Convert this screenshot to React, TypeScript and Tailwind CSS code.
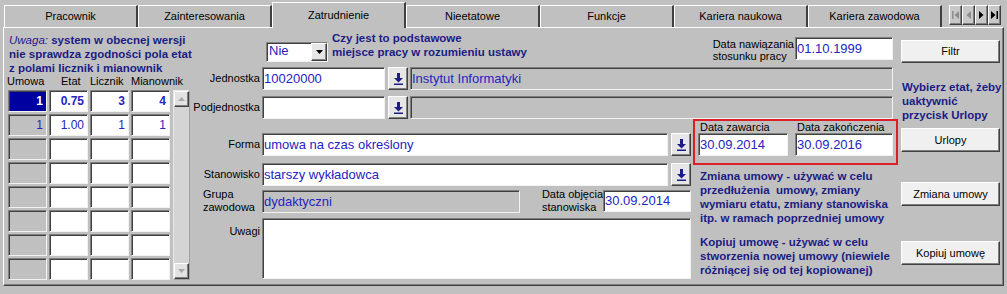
import React from 'react';

const SUNKEN =
  'border border-t-[#808080] border-l-[#808080] border-r-[#f2f2f2] border-b-[#f2f2f2] shadow-[inset_1px_1px_0_#404040]';
const RAISED =
  'border border-t-white border-l-white border-r-[#404040] border-b-[#404040] shadow-[inset_-1px_-1px_0_#808080]';
const NAVY = 'text-[#1c1c84] font-bold text-[11.5px] leading-[14px] whitespace-nowrap';
const VAL = 'text-[#2424c0] text-[13px] whitespace-nowrap';

const tabs = [
  'Pracownik',
  'Zainteresowania',
  'Zatrudnienie',
  'Nieetatowe',
  'Funkcje',
  'Kariera naukowa',
  'Kariera zawodowa',
];

const gridRows = [
  ['1', '0.75', '3', '4'],
  ['1', '1.00', '1', '1'],
  ['', '', '', ''],
  ['', '', '', ''],
  ['', '', '', ''],
  ['', '', '', ''],
  ['', '', '', ''],
  ['', '', '', ''],
];

const PickArrow = () => (
  <svg width="9" height="12" viewBox="0 0 9 12">
    <rect x="3" y="0" width="3" height="5" fill="#1c1c84" />
    <path d="M0 5h9L4.5 9.5z" fill="#1c1c84" />
    <rect x="0" y="10.5" width="9" height="1.5" fill="#1c1c84" />
  </svg>
);

const PickButton = () => (
  <div className={`${RAISED} bg-[#e6e6e6] w-[20px] h-[23px] ml-[3px] shrink-0 flex items-center justify-center`}>
    <PickArrow />
  </div>
);

const Label: React.FC<{ children: React.ReactNode }> = ({ children }) => (
  <div className="w-[70px] shrink-0 text-right pr-[2px] text-[11px] text-black whitespace-nowrap">{children}</div>
);

const Btn: React.FC<{ label: string; className: string }> = ({ label, className }) => (
  <div className={`${RAISED} bg-[#f0f0f0] w-[99px] flex items-center justify-center text-[11px] text-black ${className}`}>
    {label}
  </div>
);

const NavButton: React.FC<{ children: React.ReactNode }> = ({ children }) => (
  <div className={`${RAISED} bg-[#c8c8c8] w-[13px] h-[20px] flex items-center justify-center`}>{children}</div>
);

export default function App() {
  return (
    <div className="w-[1007px] h-[294px] bg-[#c0c0c0] overflow-hidden font-['Liberation_Sans',Arial,sans-serif] text-black">
      {/* tab strip */}
      <div className="flex h-[27px] pl-[4px] items-end">
        {tabs.map((t, i) =>
          i === 2 ? (
            <div
              key={t}
              className="relative z-10 w-[134px] h-[26px] -mb-[1px] bg-[#c0c0c0] border-t border-l border-r-2 border-t-white border-l-white border-r-[#404040] flex items-center justify-center text-[11px] pb-[1px]"
            >
              {t}
            </div>
          ) : (
            <div
              key={t}
              className="w-[134px] h-[22px] bg-[#c0c0c0] border-t border-l border-r-2 border-t-white border-l-white border-r-[#404040] flex items-center justify-center text-[11px]"
            >
              {t}
            </div>
          )
        )}
        <div className="flex ml-[7px] mb-[2px]">
          <NavButton>
            <svg width="7" height="8" viewBox="0 0 7 8">
              <rect x="0" y="0" width="1.5" height="8" fill="#8c8c8c" />
              <path d="M7 0v8L2.5 4z" fill="#8c8c8c" />
            </svg>
          </NavButton>
          <NavButton>
            <svg width="5" height="8" viewBox="0 0 5 8">
              <path d="M5 0v8L0.5 4z" fill="#8c8c8c" />
            </svg>
          </NavButton>
          <NavButton>
            <svg width="5" height="8" viewBox="0 0 5 8">
              <path d="M0 0v8l4.5-4z" fill="#000" />
            </svg>
          </NavButton>
          <NavButton>
            <svg width="7" height="8" viewBox="0 0 7 8">
              <path d="M0 0v8l4.5-4z" fill="#000" />
              <rect x="5.5" y="0" width="1.5" height="8" fill="#000" />
            </svg>
          </NavButton>
        </div>
      </div>

      {/* panel */}
      <div className={`ml-[3px] w-[1001px] h-[259px] ${RAISED} flex`}>
        {/* left column: etaty */}
        <div className="w-[188px] shrink-0 pl-[4px] pt-[5px] flex flex-col">
          <div className={`${NAVY} ml-[1px] leading-[13.5px] h-[42px]`}>
            <i className="font-normal">Uwaga:</i> system w obecnej wersji
            <br />
            nie sprawdza zgodności pola etat
            <br />z polami licznik i mianownik
          </div>
          <div className="flex h-[15px] -ml-[1px] text-[11px] leading-[12px] whitespace-nowrap">
            <span className="w-[54px]">Umowa</span>
            <span className="w-[29px]">Etat</span>
            <span className="w-[41px]">Licznik</span>
            <span>Mianownik</span>
          </div>
          <div className="flex">
            <div className="grid grid-cols-[repeat(4,39px)] auto-rows-[22px] gap-[2px]">
              {gridRows.map((row, r) =>
                row.map((v, c) => {
                  const sel = r === 0 && c === 0;
                  const bg = sel ? 'bg-[#0000a0] text-white' : c === 0 ? 'bg-[#c0c0c0] text-[#2424c0]' : 'bg-white text-[#2424c0]';
                  return (
                    <div
                      key={`${r}-${c}`}
                      className={`${SUNKEN} ${bg} ${r === 0 ? 'font-bold' : ''} text-[12px] flex items-center justify-end pr-[3px]`}
                    >
                      {v}
                    </div>
                  );
                })
              )}
            </div>
            <div className="ml-[3px] w-[17px] h-[190px] bg-[#d4d4d4] border border-t-[#e8e8e8] border-l-[#e8e8e8] border-r-[#a0a0a0] border-b-[#a0a0a0] flex flex-col justify-between">
              <div className={`${RAISED} bg-[#e2e2e2] h-[16px] flex items-center justify-center`}>
                <svg width="7" height="4" viewBox="0 0 7 4">
                  <path d="M0 4h7L3.5 0z" fill="#a8a8a8" />
                </svg>
              </div>
              <div className={`${RAISED} bg-[#e2e2e2] h-[16px] flex items-center justify-center`}>
                <svg width="7" height="4" viewBox="0 0 7 4">
                  <path d="M0 0h7L3.5 4z" fill="#a8a8a8" />
                </svg>
              </div>
            </div>
          </div>
        </div>

        {/* middle column */}
        <div className="w-[706px] shrink-0 flex flex-col">
          <div className="flex h-[39px] pr-[5px]">
            <div className={`ml-[74px] mt-[14px] w-[62px] h-[20px] ${SUNKEN} bg-white flex`}>
              <div className={`flex-1 pl-[2px] leading-[16px] ${VAL}`}>Nie</div>
              <div className={`${RAISED} bg-[#e6e6e6] w-[16px] h-full flex items-center justify-center`}>
                <svg width="7" height="4" viewBox="0 0 7 4">
                  <path d="M0 0h7L3.5 4z" fill="#000" />
                </svg>
              </div>
            </div>
            <div className={`ml-[4px] mt-[3px] ${NAVY}`}>
              Czy jest to podstawowe
              <br />
              miejsce pracy w rozumieniu ustawy
            </div>
            <div className="flex-1" />
            <div className="mt-[10px] text-[11px] leading-[12px] whitespace-nowrap">
              Data nawiązania
              <br />
              stosunku pracy
            </div>
            <div className={`ml-[1px] mt-[9px] w-[98px] h-[23px] ${SUNKEN} bg-white pl-[1px] pt-[1px] ${VAL}`}>01.10.1999</div>
          </div>

          <div className="flex h-[23px] items-center">
            <Label>Jednostka</Label>
            <div className={`${SUNKEN} bg-white w-[123px] h-full flex items-center pl-[1px] ${VAL}`}>10020000</div>
            <PickButton />
            <div className={`${SUNKEN} bg-[#c0c0c0] ml-[2px] w-[483px] h-full flex items-center pl-[1px] ${VAL}`}>
              Instytut Informatyki
            </div>
          </div>

          <div className="flex h-[23px] mt-[6px] items-center">
            <Label>Podjednostka</Label>
            <div className={`${SUNKEN} bg-white w-[123px] h-full`} />
            <PickButton />
            <div className={`${SUNKEN} bg-[#c0c0c0] ml-[2px] w-[483px] h-full`} />
          </div>

          <div className="flex">
            {/* lower left */}
            <div className="w-[501px] shrink-0 flex flex-col">
              <div className="flex h-[23px] mt-[14px] items-center">
                <Label>Forma</Label>
                <div className={`${SUNKEN} bg-white w-[406px] h-full flex items-center pl-[1px] ${VAL}`}>
                  umowa na czas określony
                </div>
                <PickButton />
              </div>
              <div className="flex h-[23px] mt-[7px] items-center">
                <Label>Stanowisko</Label>
                <div className={`${SUNKEN} bg-white w-[406px] h-full flex items-center pl-[1px] ${VAL}`}>
                  starszy wykładowca
                </div>
                <PickButton />
              </div>
              <div className="flex h-[23px] mt-[4px] pr-[2px]">
                <div className="w-[70px] shrink-0 pl-[11px] -mt-[2px] text-[11px] leading-[13px]">
                  Grupa
                  <br />
                  zawodowa
                </div>
                <div className={`${SUNKEN} bg-[#c0c0c0] w-[258px] h-full flex items-center pl-[1px] ${VAL}`}>dydaktyczni</div>
                <div className="ml-[22px] -mt-[2px] text-[11px] leading-[13px] whitespace-nowrap">
                  Data objęcia
                  <br />
                  stanowiska
                </div>
                <div className={`ml-auto w-[88px] h-[22px] ${SUNKEN} bg-white flex items-center pl-[1px] ${VAL}`}>30.09.2014</div>
              </div>
              <div className="flex h-[61px] mt-[5px]">
                <div className="w-[70px] shrink-0 text-right pr-[2px] pt-[7px] text-[11px] leading-[13px]">Uwagi</div>
                <div className={`${SUNKEN} bg-white w-[429px] h-full`} />
              </div>
            </div>

            {/* lower right */}
            <div className="w-[205px] shrink-0 flex flex-col">
              <div className="border-2 border-[#dc1f26] w-[205px] h-[46px] flex pl-[3px] gap-[7px]">
                <div className="flex flex-col w-[90px]">
                  <div className="h-[12px] pl-[2px] text-[11px] leading-[12px] whitespace-nowrap">Data zawarcia</div>
                  <div className={`${SUNKEN} bg-white h-[23px] flex items-center pl-[1px] ${VAL}`}>30.09.2014</div>
                </div>
                <div className="flex flex-col w-[98px]">
                  <div className="h-[12px] pl-[2px] text-[11px] leading-[12px] whitespace-nowrap">Data zakończenia</div>
                  <div className={`${SUNKEN} bg-white h-[23px] flex items-center pl-[1px] ${VAL}`}>30.09.2016</div>
                </div>
              </div>
              <div className={`ml-[7px] mt-[4px] ${NAVY}`}>
                Zmiana umowy - używać w celu
                <br />
                przedłużenia{'\u00a0'} umowy, zmiany
                <br />
                wymiaru etatu, zmiany stanowiska
                <br />
                itp. w ramach poprzedniej umowy
              </div>
              <div className={`ml-[7px] mt-[10px] ${NAVY}`}>
                Kopiuj umowę - używać w celu
                <br />
                stworzenia nowej umowy (niewiele
                <br />
                różniącej się od tej kopiowanej)
              </div>
            </div>
          </div>
        </div>

        {/* right column */}
        <div className="w-[105px] shrink-0 pl-[3px] flex flex-col">
          <Btn label="Filtr" className="mt-[12px] h-[23px]" />
          <div className={`ml-[1px] mt-[17px] ${NAVY}`}>
            Wybierz etat, żeby
            <br />
            uaktywnić
            <br />
            przycisk Urlopy
          </div>
          <Btn label="Urlopy" className="mt-[6px] h-[24px]" />
          <Btn label="Zmiana umowy" className="mt-[30px] h-[24px]" />
          <Btn label="Kopiuj umowę" className="mt-[35px] h-[24px]" />
        </div>
      </div>
    </div>
  );
}
